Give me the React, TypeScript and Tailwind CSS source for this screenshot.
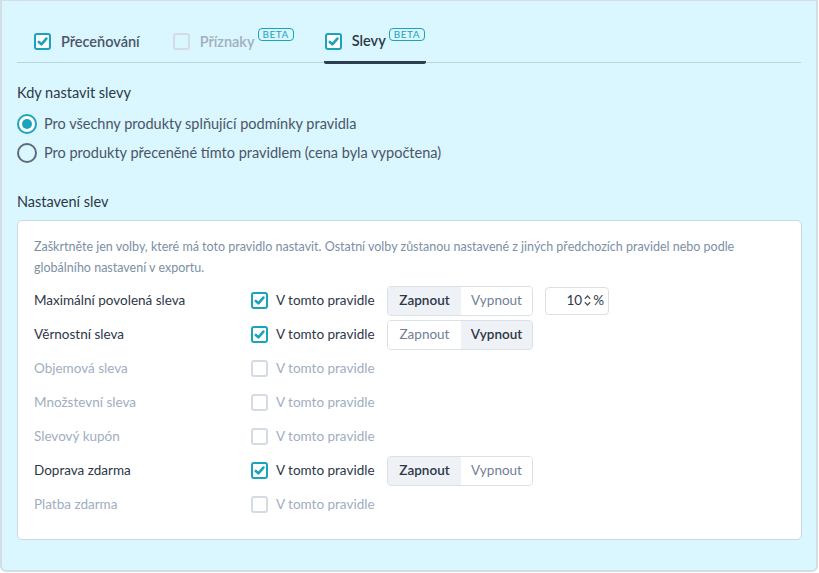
import React from 'react';

const font = { fontFamily: 'Lato, "Open Sans", sans-serif' };

function Check({ on, disabled }: { on?: boolean; disabled?: boolean }) {
  if (on) {
    return (
      <span className="flex h-[17px] w-[17px] shrink-0 items-center justify-center rounded-[3px] border-2 border-[#1aa3bd] bg-white">
        <svg viewBox="0 0 12 12" className="h-[11px] w-[11px]">
          <path d="M2 6.5 L4.8 9.2 L10.2 2.8" fill="none" stroke="#1aa3bd" strokeWidth="2.8" strokeLinecap="round" strokeLinejoin="round" />
        </svg>
      </span>
    );
  }
  return (
    <span
      className={
        'h-[17px] w-[17px] shrink-0 rounded-[3px] border-2 ' +
        (disabled ? 'border-[#d4dbe5] bg-transparent' : 'border-[#d4dbe5] bg-white')
      }
    />
  );
}

function Beta() {
  return (
    <span className="-ml-[7px] -mt-[14px] rounded-[4px] border border-[#1aa3bd] px-[4px] text-[10px] leading-[11px] tracking-wider text-[#1aa3bd]">
      BETA
    </span>
  );
}

function Toggle({ on }: { on: boolean }) {
  return (
    <div className="flex h-[30px] w-[146px] overflow-hidden rounded-[4px] border border-[#d9e0e8] text-[13.5px]">
      <div className={'flex w-[73px] items-center justify-center ' + (on ? 'bg-[#eef1f5] font-semibold text-[#2d3748]' : 'bg-white text-[#718096]')}>
        Zapnout
      </div>
      <div className={'flex flex-1 items-center justify-center ' + (!on ? 'bg-[#eef1f5] font-semibold text-[#2d3748]' : 'bg-white text-[#718096]')}>
        Vypnout
      </div>
    </div>
  );
}

const rows = [
  { label: 'Maximální povolená sleva', on: true, toggle: true, number: true },
  { label: 'Věrnostní sleva', on: true, toggle: false },
  { label: 'Objemová sleva', on: false },
  { label: 'Množstevní sleva', on: false },
  { label: 'Slevový kupón', on: false },
  { label: 'Doprava zdarma', on: true, toggle: true },
  { label: 'Platba zdarma', on: false },
];

export default function App() {
  return (
    <div style={font} className="h-[573px] w-[819px] bg-white">
      <div className="h-[572px] w-[818px] rounded-b-[6px] border-2 border-t border-[#d3dde6] bg-[#daf6fe] px-[15px]">
        {/* Tabs */}
        <div className="mt-[20px] flex h-[42px] items-stretch border-b border-[#b9d6e0] pl-[17px]">
          <div className="flex items-center gap-[10px] pr-[33px]">
            <Check on />
            <span className="text-[14.5px] font-semibold text-[#4a5568]">Přeceňování</span>
          </div>
          <div className="flex items-center gap-[10px] pr-[31px]">
            <Check disabled />
            <span className="text-[14.5px] font-semibold text-[#a0aec0]">Příznaky</span>
            <Beta />
          </div>
          <div className="-mb-[2px] -ml-[1px] flex items-center gap-[10px] rounded-[2px] border-b-[3px] border-[#2d3e50] pl-[1px] pr-[1px]">
            <Check on />
            <span className="text-[14.5px] font-semibold text-[#2d3748]">Slevy</span>
            <Beta />
          </div>
        </div>

        {/* Kdy nastavit */}
        <div className="mt-[19px] text-[14.5px] text-[#2d3748]">Kdy nastavit slevy</div>
        <div className="mt-[10px] flex flex-col gap-[9px] text-[14.5px] text-[#4a5568]">
          <label className="flex h-[20px] items-center gap-[7px]">
            <span className="flex h-[20px] w-[20px] items-center justify-center rounded-full border-2 border-[#1aa3bd] bg-white">
              <span className="h-[10px] w-[10px] rounded-full bg-[#1aa3bd]" />
            </span>
            Pro všechny produkty splňující podmínky pravidla
          </label>
          <label className="flex h-[20px] items-center gap-[7px]">
            <span className="h-[20px] w-[20px] rounded-full border-2 border-[#5f6b7a] bg-transparent" />
            Pro produkty přeceněné tímto pravidlem (cena byla vypočtena)
          </label>
        </div>

        <div className="mt-[28px] text-[14.5px] text-[#2d3748]">Nastavení slev</div>

        {/* Box */}
        <div className="mt-[7px] h-[320px] w-[785px] rounded-[5px] border border-[#cdd8e2] bg-white px-[16px] pt-[15px]">
          <p className="pr-[40px] text-[12.5px] leading-[21px] text-[#7c8fa6]">
            Zaškrtněte jen volby, které má toto pravidlo nastavit. Ostatní volby zůstanou nastavené z jiných předchozích pravidel nebo podle globálního nastavení v exportu.
          </p>
          <div className="mt-[6px] flex flex-col">
            {rows.map((r) => (
              <div key={r.label} className="flex h-[34px] items-center text-[13.5px]">
                <div className={'w-[217px] ' + (r.on ? 'text-[#2d3748]' : 'text-[#a0aec0]')}>{r.label}</div>
                <div className="flex w-[136px] items-center gap-[8px]">
                  <Check on={r.on} disabled={!r.on} />
                  <span className={r.on ? 'text-[#2d3748]' : 'text-[#a0aec0]'}>V tomto pravidle</span>
                </div>
                {r.toggle !== undefined && <Toggle on={r.toggle} />}
                {r.number && (
                  <div className="ml-[12px] flex h-[28px] w-[64px] items-center justify-end rounded-[4px] border border-[#d9e0e8] pr-[4px] text-[13.5px] text-[#2d3748]">
                    <span>10</span>
                    <svg viewBox="0 0 10 14" className="mx-[1px] h-[13px] w-[9px]">
                      <path d="M2 5 L5 2 L8 5 M2 9 L5 12 L8 9" fill="none" stroke="#555" strokeWidth="1.4" />
                    </svg>
                    <span>%</span>
                  </div>
                )}
              </div>
            ))}
          </div>
        </div>
      </div>
    </div>
  );
}
